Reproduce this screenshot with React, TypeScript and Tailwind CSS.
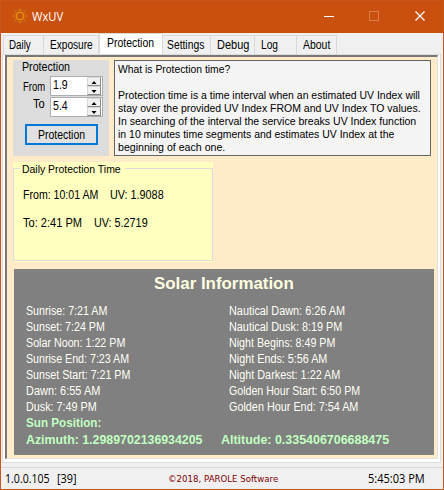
import { useLayoutEffect, useRef } from "react";

const SANS = "font-['Liberation_Sans',sans-serif]";
const UI = "font-['Open_Sans','Noto_Sans',sans-serif]";

/** One line of text condensed or widened to a given width. */
function Fit({ w, className = "", children }: { w: number; className?: string; children: string }) {
  const ref = useRef<HTMLSpanElement>(null);
  useLayoutEffect(() => {
    const el = ref.current;
    if (el) el.style.transform = `scaleX(${w / el.offsetWidth})`;
  }, [w, children]);
  return (
    <span className={`block shrink-0 ${className}`} style={{ width: w }}>
      <span ref={ref} className="inline-block origin-left whitespace-pre align-top">
        {children}
      </span>
    </span>
  );
}

function SunIcon() {
  const rays = Array.from({ length: 16 }, (_, i) => i * 22.5);
  return (
    <svg className="-mt-[2px] h-[16px] w-[16px]" viewBox="0 0 16 16" fill="none" stroke="#e0930f">
      <circle cx="8" cy="8" r="3.6" strokeWidth="1.4" />
      {rays.map((a, i) => (
        <path key={a} d={i % 2 ? "M8 1.9V3.2" : "M8 0.6V3"} strokeWidth="0.9" transform={`rotate(${a} 8 8)`} />
      ))}
    </svg>
  );
}

const tabs = [
  { label: "Daily", w: 22, box: "w-[41px] pl-[5px]" },
  { label: "Exposure", w: 43, box: "w-[55px] pl-[6px]" },
  { label: "Protection", w: 47, box: "w-[64px] pl-[7px]", active: true },
  { label: "Settings", w: 37, box: "w-[48px] pl-[4px]" },
  { label: "Debug", w: 32, box: "w-[44px] pl-[6px]" },
  { label: "Log", w: 17, box: "w-[42px] pl-[6px]" },
  { label: "About", w: 27, box: "w-[40px] pl-[6px]" },
];

const help: [string, number][] = [
  ["What is Protection time?", 112],
  [" ", 3],
  ["Protection time is a time interval when an estimated UV Index will", 302],
  ["stay over the provided UV Index FROM and UV Index TO values.", 303],
  ["In searching of the interval the service breaks UV Index function", 298],
  ["in 10 minutes time segments and estimates UV Index at the", 276],
  ["beginning of each one.", 107],
];

const left: [string, number][] = [
  ["Sunrise: 7:21 AM", 81],
  ["Sunset: 7:24 PM", 79],
  ["Solar Noon: 1:22 PM", 99],
  ["Sunrise End: 7:23 AM", 103],
  ["Sunset Start: 7:21 PM", 104],
  ["Dawn: 6:55 AM", 74],
  ["Dusk: 7:49 PM", 71],
];

const right: [string, number][] = [
  ["Nautical Dawn: 6:26 AM", 116],
  ["Nautical Dusk: 8:19 PM", 113],
  ["Night Begins: 8:49 PM", 106],
  ["Night Ends: 5:56 AM", 98],
  ["Night Darkest: 1:22 AM", 111],
  ["Golden Hour Start: 6:50 PM", 131],
  ["Golden Hour End: 7:54 AM", 129],
];

function Spinner({ value }: { value: string }) {
  return (
    <div className="flex h-[20px] w-[53px] justify-between border border-[#abadb3] bg-white pr-px pl-[2px]">
      <Fit w={15} className="text-[12px] leading-[16px]">{value}</Fit>
      <div className="flex w-[14px] flex-col">
        {["M1.5 6H6.5L4 3Z", "M1.5 3H6.5L4 6Z"].map((d) => (
          <div key={d} className="flex h-[9px] items-center justify-center border border-[#d8d8d8] border-r-[#8a8a8a] border-b-[#8a8a8a] bg-[#f0f0f0]">
            <svg className="h-[8px] w-[8px] shrink-0" viewBox="0 0 8 8"><path d={d} fill="#000" /></svg>
          </div>
        ))}
      </div>
    </div>
  );
}

export default function App() {
  return (
    <div className={`flex h-[490px] w-[444px] flex-col border border-[#c9571c] bg-[#f0f0f0] text-black ${SANS}`}>
      <header className="flex h-[32px] shrink-0 items-center bg-[#ca5010] pl-[11px] text-white">
        <SunIcon />
        <Fit w={31} className={`ml-[4px] text-[12px] leading-[16px] ${UI}`}>WxUV</Fit>
        <svg className="-mt-[2px] mr-[17px] ml-auto h-[12px] w-[104px]" viewBox="0 0 104 12" fill="none">
          <path d="M2 6.5H12" stroke="#fff" />
          <rect x="47.5" y="1.5" width="9" height="9" stroke="#dc8050" />
          <path d="M93.5 1.5L102.5 10.5M102.5 1.5L93.5 10.5" stroke="#fff" strokeWidth="1.2" />
        </svg>
      </header>

      <nav className="flex h-[21px] shrink-0 items-end pl-[2px]">
        {tabs.map((t) =>
          t.active ? (
            <div key={t.label} className={`h-[21px] border-x border-t border-[#d9d9d9] bg-white pt-[2px] ${t.box}`}>
              <Fit w={t.w} className="text-[12px] leading-[14px]">{t.label}</Fit>
            </div>
          ) : (
            <div key={t.label} className={`h-[19px] border-t border-r border-[#d9d9d9] pt-[2px] first:border-l ${t.box}`}>
              <Fit w={t.w} className="text-[12px] leading-[14px]">{t.label}</Fit>
            </div>
          ),
        )}
      </nav>

      <main className="mr-[2px] ml-px flex h-[409px] shrink-0 flex-col border border-[#dcdcdc] bg-white pr-[2px] pb-[3px] pl-[2px]">
        <div className="flex grow flex-col border-t-2 border-r border-b border-l-2 border-t-[#777777] border-r-[#e3e3e3] border-b-[#e3e3e3] border-l-[#777777] bg-[#ffebc8] pt-[3px] pl-[6px]">
          <div className="flex h-[96px] gap-[5px]">
            <section className="flex w-[96px] flex-col bg-[#dcdcdc]">
              <Fit w={48} className="ml-[9px] h-[16px] text-[12px] leading-[14px]">Protection</Fit>
              <div className="flex h-[21px] pl-[10px]">
                <Fit w={22} className="mr-[5px] pt-[4px] text-[12px] leading-[14px]">From</Fit>
                <Spinner value="1.9" />
              </div>
              <div className="flex h-[21px] pl-[20px]">
                <Fit w={12} className="mr-[5px] text-[12px] leading-[14px]">To</Fit>
                <Spinner value="5.4" />
              </div>
              <button className="mt-[6px] ml-[12px] flex h-[21px] w-[73px] items-center justify-center border-2 border-[#0078d7] bg-[#e1e1e1]">
                <Fit w={47} className="text-left text-[12px] leading-[14px]">Protection</Fit>
              </button>
            </section>
            <section className="w-[317px] border border-[#646464] bg-[#f4f4f4] pt-[2px] pl-[3px]">
              {help.map(([t, w], i) => (
                <Fit key={i} w={w} className="h-[13px] text-[11px] leading-[13px]">{t}</Fit>
              ))}
            </section>
          </div>

          <section className="mt-[6px] h-[100px] w-[200px] bg-[#ffffc0] pt-[6px]">
            <fieldset className="h-[93px] border border-[#dcdcdc]">
              <div className="-mt-[7px] ml-[6px] w-[105px] bg-[#ffffc0] pl-[2px]">
                <Fit w={99} className="text-[11.5px] leading-[14px]">Daily Protection Time</Fit>
              </div>
              <div className="mt-[12px] ml-[9px] flex gap-[12px] text-[12px] leading-[14px]">
                <Fit w={75}>From: 10:01 AM</Fit>
                <Fit w={54}>UV: 1.9088</Fit>
              </div>
              <div className="mt-[14px] ml-[9px] flex gap-[12px] text-[12px] leading-[14px]">
                <Fit w={59}>To: 2:41 PM</Fit>
                <Fit w={54}>UV: 5.2719</Fit>
              </div>
            </fieldset>
          </section>

          <section className="mt-[7px] ml-px h-[186px] w-[420px] bg-[#808080] pl-[12px] text-[#fffff4]">
            <Fit w={140} className="ml-[128px] pt-[5px] text-[17px] leading-[20px] font-bold text-[#ffffe0]">Solar Information</Fit>
            <div className="mt-[9px] flex text-[12px] leading-[16px]">
              <div className="w-[203px]">
                {left.map(([t, w]) => <Fit key={t} w={w}>{t}</Fit>)}
              </div>
              <div>
                {right.map(([t, w]) => <Fit key={t} w={w}>{t}</Fit>)}
              </div>
            </div>
            <div className="text-[12px] leading-[17px] font-bold text-[#c0ffc0]">
              <Fit w={75}>Sun Position:</Fit>
              <div className="flex gap-[19px]">
                <Fit w={176}>Azimuth: 1.2989702136934205</Fit>
                <Fit w={168}>Altitude: 0.335406706688475</Fit>
              </div>
            </div>
          </section>
        </div>
      </main>

      <footer className="mt-[4px] flex h-[22px] shrink-0 items-center border-t border-[#d7d7d7] pl-[4px]">
        <Fit w={45} className={`text-[12px] leading-[16px] ${UI}`}>1.0.0.105</Fit>
        <Fit w={20} className={`ml-[7px] text-[12px] leading-[16px] ${UI}`}>[39]</Fit>
        <Fit w={110} className="ml-[91px] font-['DejaVu_Sans',sans-serif] text-[9px] leading-[14px] text-[#800000]">©2018, PAROLE Software</Fit>
        <Fit w={57} className={`ml-[90px] text-[12px] leading-[16px] ${UI}`}>5:45:03 PM</Fit>
      </footer>
    </div>
  );
}
